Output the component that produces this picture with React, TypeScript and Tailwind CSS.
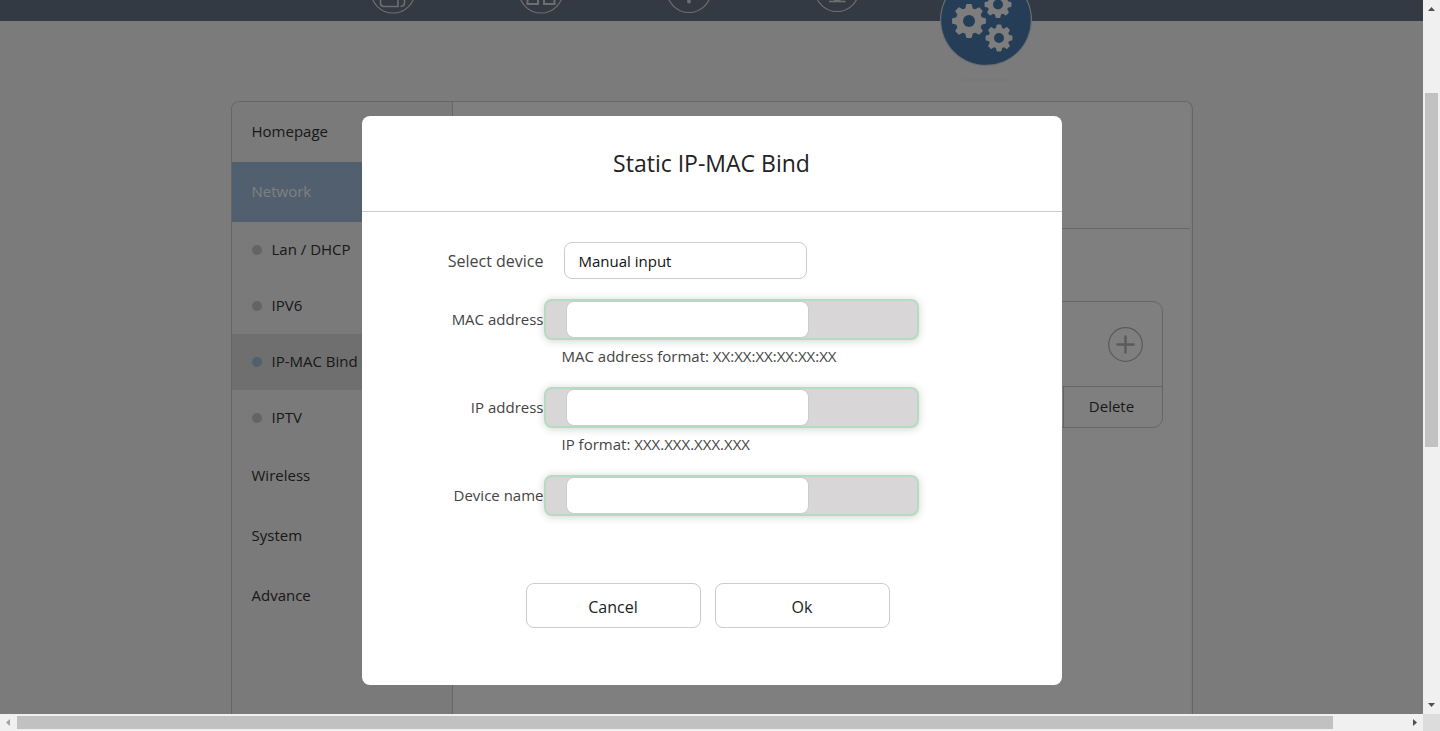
import { useState } from "react";

type Entry = { label: string; sub?: boolean };

const entries: Entry[] = [
  { label: "Homepage" },
  { label: "Network" },
  { label: "Lan / DHCP", sub: true },
  { label: "IPV6", sub: true },
  { label: "IP-MAC Bind", sub: true },
  { label: "IPTV", sub: true },
  { label: "Wireless" },
  { label: "System" },
  { label: "Advance" },
];

function gear(cx: number, cy: number, outer: number, root: number) {
  const points: string[] = [];
  for (let i = 0; i < 8; i++) {
    const a = (i * Math.PI) / 4 - Math.PI / 2;
    const steps: [number, number][] = [
      [-0.25, root],
      [-0.13, outer],
      [0.13, outer],
      [0.25, root],
    ];
    for (const [d, r] of steps) {
      points.push(`${(cx + r * Math.cos(a + d)).toFixed(2)},${(cy + r * Math.sin(a + d)).toFixed(2)}`);
    }
  }
  return points.join(" ");
}

function Gear({ cx, cy, outer, root, hole }: { cx: number; cy: number; outer: number; root: number; hole: number }) {
  return (
    <g>
      <polygon points={gear(cx, cy, outer, root)} fill="#fbfbfb" stroke="#fbfbfb" strokeWidth="1.5" strokeLinejoin="round" />
      <circle cx={cx} cy={cy} r={hole} fill="#4c7ab0" />
    </g>
  );
}

function NavIcon({ label, children }: { label: string; children: React.ReactNode }) {
  return (
    <a href="#" aria-label={label} className="flex w-[148px] justify-center">
      <svg width="46" height="16" viewBox="0 0 46 16" fill="none" stroke="#dcdcdc">
        {children}
      </svg>
    </a>
  );
}

function TopBar() {
  return (
    <header className="flex h-[21px] justify-center bg-[#687488] pr-[45px]">
      <NavIcon label="Status">
        <circle cx="23" cy="-9" r="22" strokeWidth="1.2" />
        <path d="M10.5 -4V3Q10.5 6.500 14 6.500H28V-4M34.5 -4V3Q34.5 6 30.500 6.500" strokeWidth="1.6" />
      </NavIcon>
      <NavIcon label="Apps">
        <circle cx="23" cy="-9" r="22" strokeWidth="1.2" />
        <path d="M9.5 -6V4H20V-6M26 -6V4H36.500V-6" strokeWidth="2" />
      </NavIcon>
      <NavIcon label="Wireless">
        <circle cx="23" cy="-9.5" r="22" strokeWidth="1.2" />
        <circle cx="23" cy="1.500" r="1.900" fill="#dcdcdc" stroke="none" />
        <path d="M23 -4V1" strokeWidth="2.500" />
      </NavIcon>
      <NavIcon label="Devices">
        <circle cx="23" cy="-10.5" r="22" strokeWidth="1.2" />
        <path d="M15 1.500H31.500" strokeWidth="1.600" />
        <path d="M19.500 1.500L21 -1H25.500L27 1.500Z" fill="#dcdcdc" stroke="none" />
      </NavIcon>
      <a href="#" aria-label="Settings" className="flex w-[148px] justify-center">
        <svg width="100" height="90" viewBox="935 0 100 90" className="shrink-0">
          <ellipse cx="985" cy="80" rx="26" ry="2.5" fill="#f3f3f3" />
          <circle cx="986" cy="20" r="46" fill="#d5dae2" />
          <circle cx="986" cy="20" r="44.800" fill="#4c7ab0" />
          <Gear cx={969} cy={21} outer={16.3} root={12.5} hole={6} />
          <Gear cx={998} cy={4.5} outer={12.8} root={9.8} hole={5} />
          <Gear cx={999} cy={38} outer={12.8} root={9.8} hole={5} />
        </svg>
      </a>
    </header>
  );
}

function Sidebar() {
  return (
    <nav className="w-[221px] shrink-0 border-r border-[#cccccc] bg-[#f4f4f4]">
      <ul>
        {entries.map((e) => {
          const here = e.label === "IP-MAC Bind";
          const open = e.label === "Network";
          return (
            <li key={e.label}>
              <a
                href="#"
                className={`flex items-center gap-2.5 px-5 ${e.sub ? "h-14" : "h-[60px]"} ${
                  open ? "bg-[#a4bfde] text-white" : here ? "bg-[#dedede]" : ""
                }`}
              >
                {e.sub && <span className={`size-2.5 rounded-full ${here ? "bg-[#a4bfde]" : "bg-[#c8c9ce]"}`} />}
                <span className="pb-0.5">{e.label}</span>
              </a>
            </li>
          );
        })}
      </ul>
    </nav>
  );
}

function Field({ id, label, hint }: { id: string; label: string; hint?: string }) {
  return (
    <div className="grid grid-cols-[182px_375px]">
      <label htmlFor={id} className="self-center text-right">
        {label}
      </label>
      <div className="rounded-lg border-2 border-[#b5dbc2] bg-[#d8d6d7] pl-5 shadow-[0_1px_8px_rgba(0,0,0,0.18)]">
        <input
          id={id}
          type="text"
          className="block h-[37px] w-[243px] rounded-lg border border-[#cccccc] bg-white px-3.5 outline-none"
        />
      </div>
      {hint && <p className="col-start-2 h-[47px] pt-1.5 pl-[18px] leading-5">{hint}</p>}
    </div>
  );
}

function BindDialog() {
  const [device, setDevice] = useState("manual");
  return (
    <div role="dialog" aria-modal="true" aria-labelledby="bind-title" className="w-[700px] rounded-lg bg-white text-[#444444]">
      <h2
        id="bind-title"
        className="flex h-24 items-center justify-center border-b border-[#cccccc] text-[23px] text-[#222222]"
      >
        Static IP-MAC Bind
      </h2>
      <form className="pt-[30px] pb-[57px]" onSubmit={(e) => e.preventDefault()}>
        <div className="mb-5 grid grid-cols-[182px_375px]">
          <label htmlFor="device" className="self-center text-right text-base">
            Select device
          </label>
          <select
            id="device"
            value={device}
            onChange={(e) => setDevice(e.target.value)}
            className="ml-5 h-[37px] w-[243px] appearance-none rounded-lg border border-[#cccccc] bg-white px-3.5 pt-0.5 text-[#111111] outline-none"
          >
            <option value="manual">Manual input</option>
          </select>
        </div>
        <Field id="mac" label="MAC address" hint="MAC address format: XX:XX:XX:XX:XX:XX" />
        <Field id="ip" label="IP address" hint="IP format: XXX.XXX.XXX.XXX" />
        <Field id="name" label="Device name" />
        <div className="mt-[67px] flex justify-center gap-3.5 pr-2 text-base text-[#222222]">
          <button type="button" className="h-[45px] w-[175px] rounded-lg border border-[#cccccc] bg-white pt-0.5">
            Cancel
          </button>
          <button type="submit" className="h-[45px] w-[175px] rounded-lg border border-[#cccccc] bg-white pt-0.5">
            Ok
          </button>
        </div>
      </form>
    </div>
  );
}

export default function App() {
  return (
    <div className="grid h-screen grid-cols-[minmax(0,1fr)_17px] grid-rows-[minmax(0,1fr)_17px] font-['Open_Sans','Noto_Sans',sans-serif] text-[15px] text-[#333333]">
      <div className="relative flex flex-col overflow-hidden bg-[#f7f7f7]">
        <TopBar />
        <main className="mx-auto mt-20 flex min-h-0 w-[962px] grow overflow-hidden rounded-t-lg border border-b-0 border-[#cccccc] bg-[#f7f7f7] pr-0.5">
          <Sidebar />
          <section className="grow bg-white">
            <div className="h-[127px] border-b border-[#cccccc]" />
            <div className="mt-[72px] mr-[27px] ml-7 rounded-[10px] border border-[#cccccc]">
              <div className="flex h-[85px] items-center justify-end border-b border-[#cccccc] pr-[19px]">
                <button type="button" aria-label="Add" className="size-[35px]">
                  <svg viewBox="0 0 35 35" fill="none" stroke="#b4b4b4">
                    <circle cx="17.5" cy="17.5" r="16.800" strokeWidth="1.200" />
                    <path d="M8.500 17.500H26.500M17.500 8.500V26.500" strokeWidth="2.400" />
                  </svg>
                </button>
              </div>
              <div className="flex h-10 justify-end">
                <button type="button" className="w-[99px] border-l border-[#cccccc] pr-0.5 pb-0.5">
                  Delete
                </button>
              </div>
            </div>
          </section>
        </main>
        <div className="absolute inset-0 flex items-start justify-center bg-black/50 pt-[116px]">
          <BindDialog />
        </div>
      </div>

      <div aria-hidden="true" className="flex flex-col items-center bg-[#f0f0f0]">
        <svg width="17" height="17" fill="#505050">
          <path d="M5 11H12L8.500 7Z" />
        </svg>
        <div className="flex-[76]" />
        <div className="w-[13px] flex-[354] bg-[#c1c1c1]" />
        <div className="flex-[250]" />
        <svg width="17" height="17" fill="#505050">
          <path d="M5 6H12L8.500 10Z" />
        </svg>
      </div>
      <div aria-hidden="true" className="flex items-center bg-[#f0f0f0]">
        <svg width="17" height="17" fill="#a3a3a3">
          <path d="M10 5V12L6 8.500Z" />
        </svg>
        <div className="h-[13px] flex-[1316] bg-[#c1c1c1]" />
        <div className="flex-[73]" />
        <svg width="17" height="17" fill="#505050">
          <path d="M7 5V12L11 8.500Z" />
        </svg>
      </div>
      <div className="bg-[#dcdcdc]" />
    </div>
  );
}
